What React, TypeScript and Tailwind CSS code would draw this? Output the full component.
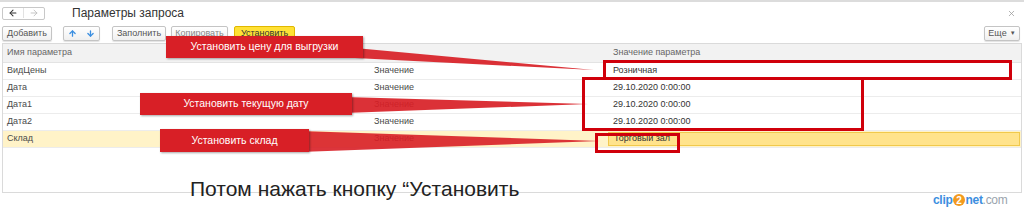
import { ArrowLeft, ArrowRight, ArrowUp, ArrowDown, X } from "lucide-react";

const FONT = { fontFamily: '"Liberation Sans", Arial, sans-serif' };

const rows = [
  { name: "ВидЦены", kind: "Значение", value: "Розничная" },
  { name: "Дата", kind: "Значение", value: "29.10.2020 0:00:00" },
  { name: "Дата1", kind: "Значение", value: "29.10.2020 0:00:00" },
  { name: "Дата2", kind: "Значение", value: "29.10.2020 0:00:00" },
  { name: "Склад", kind: "Значение", value: "Торговый зал", selected: true },
];

const Btn = ({ children, className = "" }: { children: React.ReactNode; className?: string }) => (
  <div
    className={`flex h-[15px] items-center justify-center rounded-[2px] border border-[#c4c4c4] bg-gradient-to-b from-white to-[#f0f0f0] text-[9px] text-[#555] shadow-[0_1px_1px_rgba(0,0,0,0.12)] ${className}`}
  >
    {children}
  </div>
);

const Callout = ({ text, className }: { text: string; className: string }) => (
  <div
    className={`absolute flex items-center justify-center bg-[#d81f26] text-[10.5px] text-white shadow-[1px_1px_2px_rgba(0,0,0,0.35)] ${className}`}
  >
    {text}
  </div>
);

export default function App() {
  return (
    <div className="relative h-[208px] w-[1024px] overflow-hidden bg-white" style={FONT}>
      <div className="h-[2px] bg-[#dcdcdc]" />

      {/* title bar */}
      <div className="flex h-[22px] items-center pl-[2px] pr-[8px]">
        <div className="flex h-[13px] w-[43px] items-center rounded-[2px] border border-[#c8c8c8] bg-white">
          <div className="flex flex-1 items-center justify-center border-r border-[#e2e2e2]">
            <ArrowLeft size={10} strokeWidth={2.5} className="text-[#333]" />
          </div>
          <div className="flex flex-1 items-center justify-center">
            <ArrowRight size={10} strokeWidth={2} className="text-[#bbb]" />
          </div>
        </div>
        <div className="ml-[27px] text-[12px] text-[#333]">Параметры запроса</div>
        <X size={9} className="ml-auto text-[#999]" />
      </div>

      {/* toolbar */}
      <div className="mt-[2px] flex items-center pl-[2px] pr-[4px]">
        <Btn className="w-[50px]">Добавить</Btn>
        <div className="ml-[11px] flex h-[15px] w-[37px] rounded-[2px] border border-[#c4c4c4] bg-gradient-to-b from-white to-[#f0f0f0] shadow-[0_1px_1px_rgba(0,0,0,0.12)]">
          <div className="flex flex-1 items-center justify-center">
            <ArrowUp size={9} strokeWidth={3.5} className="text-[#3a8ee0]" />
          </div>
          <div className="flex flex-1 items-center justify-center">
            <ArrowDown size={9} strokeWidth={3.5} className="text-[#3a8ee0]" />
          </div>
        </div>
        <Btn className="ml-[12px] w-[54px]">Заполнить</Btn>
        <Btn className="ml-[5px] w-[57px] text-[#888]">Копировать</Btn>
        <div className="ml-[6px] flex h-[15px] w-[61px] items-center justify-center rounded-[2px] border border-[#e0b800] bg-[#ffe135] text-[9px] text-[#333]">
          Установить
        </div>
        <Btn className="ml-auto w-[36px] gap-[3px]">
          Еще <span className="text-[6px]">▼</span>
        </Btn>
      </div>

      {/* table */}
      <div className="mx-[2px] mt-[2px] h-[150px] border border-[#dadada] text-[9px] text-[#4a4a4a]">
        <div className="grid h-[19px] grid-cols-[366px_239px_1fr] items-center border-b border-[#e3e3e3] bg-[#f2f2f2] text-[#666]">
          <div className="pl-[4px]">Имя параметра</div>
          <div />
          <div className="pl-[5px]">Значение параметра</div>
        </div>
        {rows.map((r) => (
          <div
            key={r.name}
            className={`grid h-[17px] grid-cols-[366px_239px_1fr] items-center border-b border-[#ececec] ${
              r.selected ? "bg-[#fff3c8]" : "bg-white"
            }`}
          >
            <div className="pl-[4px]">{r.name}</div>
            <div className="pl-[5px]">{r.kind}</div>
            {r.selected ? (
              <div className="mr-[1px] flex h-[14px] items-center border border-[#f1c94c] bg-[#ffe38c] pl-[5px] text-[#333]">
                {r.value}
              </div>
            ) : (
              <div className="pl-[5px] text-[#333]">{r.value}</div>
            )}
          </div>
        ))}
      </div>

      {/* hint */}
      <div className="absolute left-[190px] top-[173px] text-[21px] text-[#222]">Потом нажать кнопку “Установить</div>

      {/* clip2net */}
      <div className="absolute left-[933px] top-[191px] flex items-center text-[12px] font-bold tracking-[-0.3px] text-[#3c8ee0]">
        <span>clip</span>
        <span className="mx-[0.5px] flex h-[12px] w-[12px] items-center justify-center rounded-full bg-[#f39a1e] text-[10px] text-white">
          2
        </span>
        <span>net</span>
        <span className="font-normal text-[#9aa3ad]">.com</span>
      </div>

      {/* annotation wedges */}
      <svg className="pointer-events-none absolute left-0 top-0" width="1024" height="208">
        <polygon points="355,48 355,58 594,70" fill="#d81f26" fillOpacity="0.92" />
        <polygon points="345,97 345,113 588,104" fill="#d81f26" fillOpacity="0.92" />
        <polygon points="300,131 300,152 600,141" fill="#d81f26" fillOpacity="0.9" />
      </svg>

      {/* highlight frames */}
      <div className="pointer-events-none absolute left-[603px] top-[60px] h-[20px] w-[409px] border-[3px] border-[#d0000b]" />
      <div className="pointer-events-none absolute left-[582px] top-[77px] h-[54px] w-[282px] border-[3px] border-[#d0000b]" />
      <div className="pointer-events-none absolute left-[595px] top-[133px] h-[20px] w-[85px] border-[3px] border-[#d0000b]" />

      <Callout text="Установить цену для выгрузки" className="left-[166px] top-[36px] h-[22px] w-[197px]" />
      <Callout text="Установить текущую дату" className="left-[140px] top-[93px] h-[22px] w-[212px]" />
      <Callout text="Установить склад" className="left-[160px] top-[129px] h-[23px] w-[149px]" />
    </div>
  );
}
